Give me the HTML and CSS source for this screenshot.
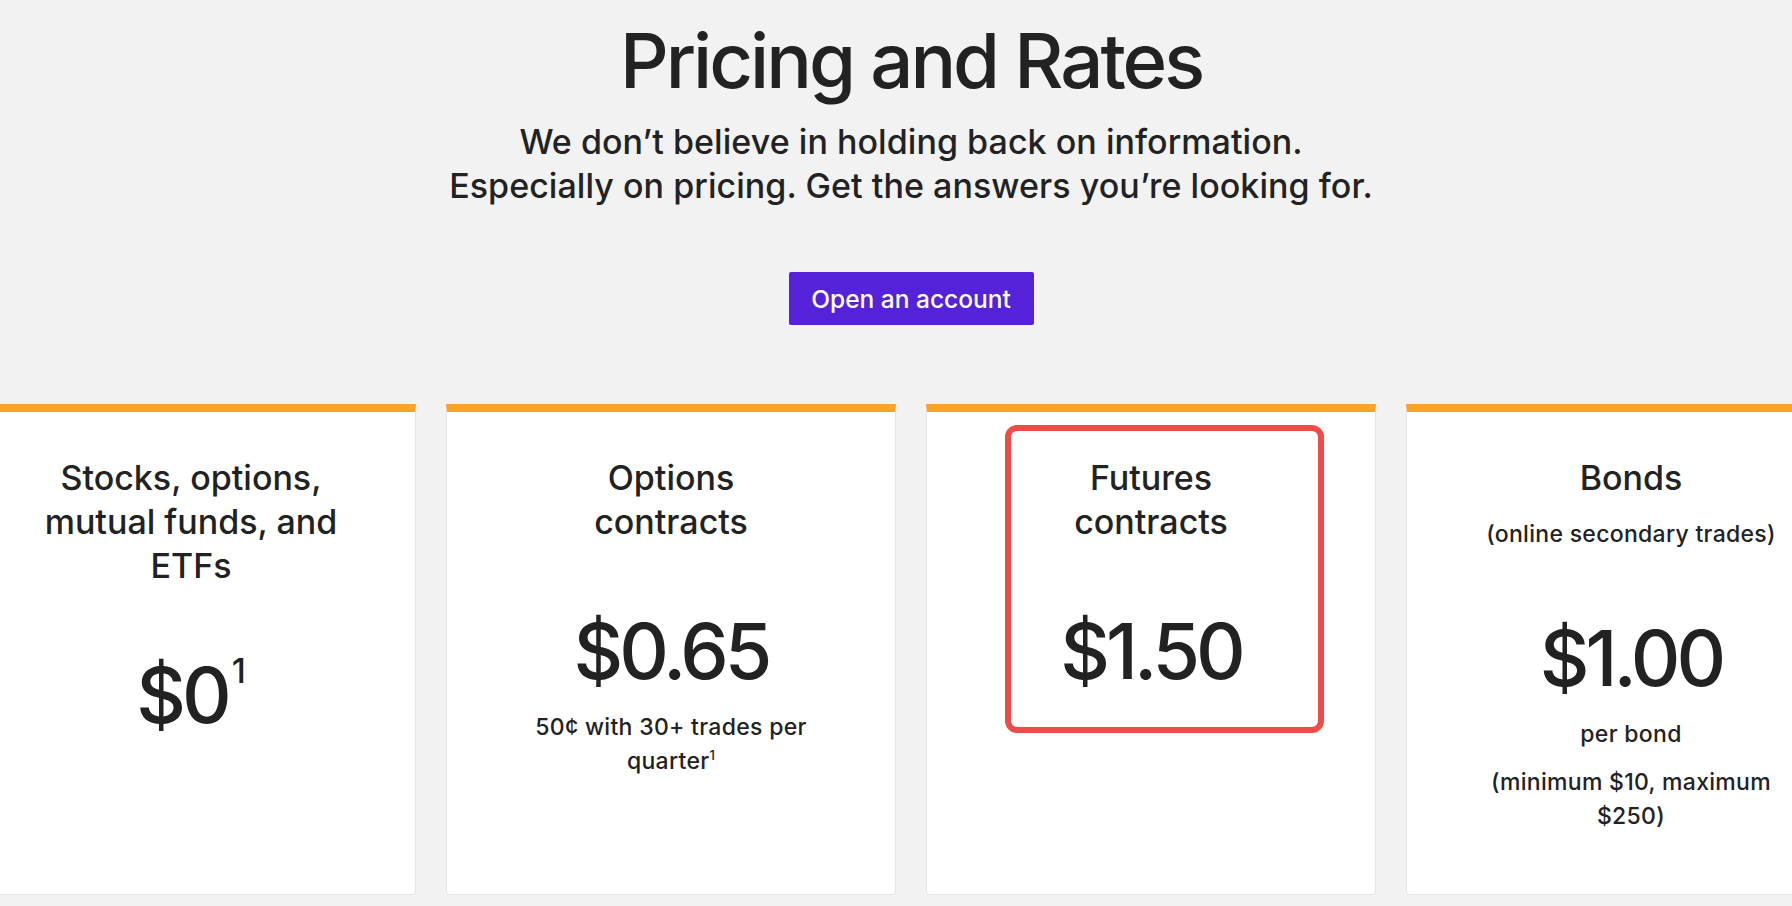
FILE: index.html
```html
<!DOCTYPE html>
<html lang="en">
<head>
<meta charset="utf-8">
<title>Pricing and Rates</title>
<link rel="stylesheet" href="styles.css">
</head>
<body>
<header class="hero">
  <h1 class="hero-title">Pricing and Rates</h1>
  <p class="hero-sub">We don’t believe in holding back on information.<br>Especially on pricing. Get the answers you’re looking for.</p>
  <a class="btn" href="#">Open an account</a>
</header>
<section class="cards">
  <div class="card">
    <h2 class="card-title">Stocks, options,<br>mutual funds, and<br>ETFs</h2>
    <div class="price">$0<span class="price-sup">1</span></div>
  </div>
  <div class="card">
    <h2 class="card-title">Options<br>contracts</h2>
    <div class="price">$0.65</div>
    <p class="note">50¢ with 30+ trades per quarter<sup class="fn">1</sup></p>
  </div>
  <div class="card">
    <h2 class="card-title">Futures<br>contracts</h2>
    <div class="price">$1.50</div>
    <div class="highlight"></div>
  </div>
  <div class="card">
    <h2 class="card-title">Bonds</h2>
    <p class="card-sub">(online secondary trades)</p>
    <div class="price">$1.00</div>
    <p class="note">per bond</p>
    <p class="note note-gap">(minimum $10, maximum $250)</p>
  </div>
</section>
</body>
</html>
```
FILE: styles.css
```css
html, body {
  margin: 0;
  padding: 0;
}
body {
  background: #f2f2f2;
  color: #222222;
  font-family: Inter, "Liberation Sans", sans-serif;
  overflow: hidden;
  height: 906px;
}
.hero {
  text-align: center;
  padding-left: 30px;
}
.hero-title {
  margin: 22px 0 0;
  font-size: 76px;
  line-height: 76px;
  font-weight: 500;
  letter-spacing: -3px;
}
.hero-sub {
  margin: 22px 0 0;
  font-size: 34px;
  line-height: 44px;
  font-weight: 450;
  letter-spacing: 0.05px;
}
.btn {
  display: inline-flex;
  align-items: center;
  justify-content: center;
  margin-top: 64px;
  width: 245px;
  height: 53px;
  background: #5423d9;
  color: #ffffff;
  font-size: 24.5px;
  font-weight: 500;
  text-decoration: none;
  border-radius: 2px;
  letter-spacing: 0;
}
.cards {
  display: flex;
  gap: 30px;
  margin-top: 79px;
  margin-left: -34px;
}
.card {
  position: relative;
  flex: 0 0 450px;
  box-sizing: border-box;
  height: 491px;
  background: #ffffff;
  border-top: 8px solid #f9a328;
  border-left: 1px solid #e4e4e4;
  border-right: 1px solid #e4e4e4;
  border-bottom: 1px solid #e4e4e4;
  border-radius: 0 0 3px 3px;
  padding: 44px 50px 0;
  text-align: center;
}
.card-title {
  margin: 0;
  font-size: 34px;
  line-height: 44px;
  font-weight: 500;
}
.card-sub {
  margin: 18px 0 0;
  font-size: 23px;
  line-height: 33px;
  font-weight: 450;
  letter-spacing: 0.3px;
}
.price {
  margin-top: 61px;
  font-size: 77px;
  line-height: 93px;
  font-weight: 500;
  letter-spacing: -4px;
}
.price-sup {
  font-size: 34px;
  line-height: 34px;
  vertical-align: 40px;
  letter-spacing: 0;
  margin-left: 4px;
}
.note {
  margin: 12px auto 0;
  max-width: 300px;
  font-size: 23px;
  line-height: 34px;
  font-weight: 450;
  letter-spacing: 0.3px;
}
.note-gap {
  margin-top: 14px;
}
.fn {
  font-size: 13px;
  line-height: 0;
  vertical-align: 9px;
}
.highlight {
  position: absolute;
  left: 78px;
  top: 13px;
  width: 319px;
  height: 308px;
  box-sizing: border-box;
  border: 6px solid #ef4b47;
  border-radius: 12px;
}
```
